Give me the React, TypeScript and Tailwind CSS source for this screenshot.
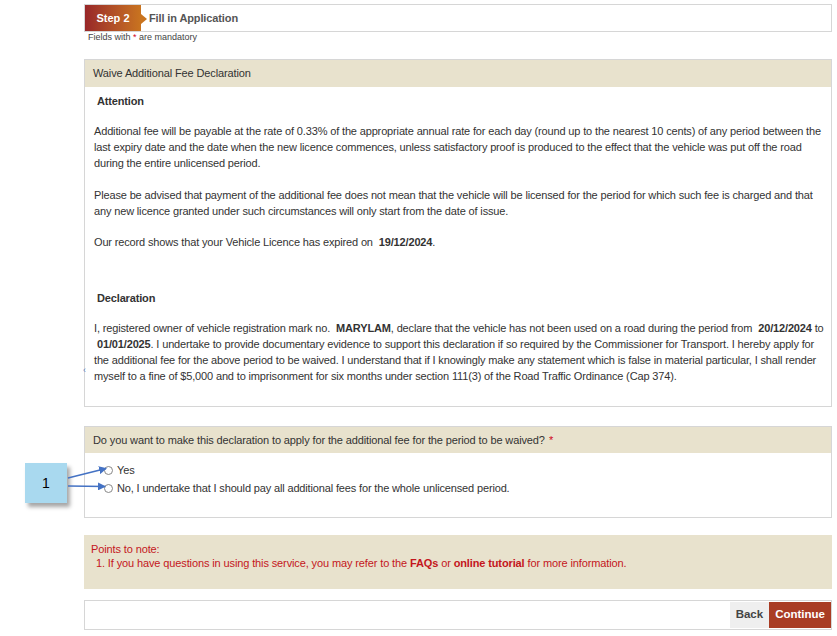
import React from "react";

const body = "text-[11px] leading-[16px] tracking-[-0.15px] text-[#333]";

function Callout() {
  return (
    <>
      <div className="absolute left-[25px] top-[463px] flex h-[40px] w-[42px] items-center justify-center bg-[#a9d9ef] text-[14px] text-black shadow-[3px_4px_4px_rgba(0,0,0,0.35)]">
        1
      </div>
      <svg
        className="absolute left-[66px] top-[460px]"
        width="50"
        height="36"
        viewBox="0 0 50 36"
      >
        <defs>
          <marker
            id="arr"
            markerWidth="8"
            markerHeight="8"
            refX="7"
            refY="4"
            orient="auto"
            markerUnits="userSpaceOnUse"
          >
            <path d="M0,0 L8,4 L0,8 z" fill="#4472c4" />
          </marker>
        </defs>
        <line x1="2" y1="18" x2="40" y2="8.5" stroke="#4472c4" strokeWidth="1.3" markerEnd="url(#arr)" />
        <line x1="2" y1="26" x2="39" y2="26.5" stroke="#4472c4" strokeWidth="1.3" markerEnd="url(#arr)" />
      </svg>
      <span className="absolute left-[83px] top-[364px] text-[9px] text-[#5b82c4]">‹</span>
    </>
  );
}

function Radio({ label }: { label: string }) {
  return (
    <label className="flex h-[18px] items-center gap-[4px] text-[11px] tracking-[-0.15px] text-[#333]">
      <span className="h-[9px] w-[9px] rounded-full border border-[#888] bg-white" />
      {label}
    </label>
  );
}

export default function App() {
  return (
    <div className="relative min-h-[636px] w-[837px] bg-white font-['Liberation_Sans',Arial,sans-serif]">
      <div className="ml-[84px] flex w-[748px] flex-col pt-[4px]">
        {/* Step bar */}
        <div className="flex h-[28px] items-center border border-[#d6d6d6] bg-white">
          <div className="relative flex h-full w-[56px] items-center justify-center bg-gradient-to-r from-[#982628] to-[#c9741f] text-[11px] font-bold text-white">
            Step 2
            <span className="absolute right-[-6px] top-[9px] h-0 w-0 border-y-[5px] border-l-[6px] border-y-transparent border-l-[#c9741f]" />
          </div>
          <span className="ml-[8px] text-[11px] font-bold tracking-[-0.12px] text-[#555]">Fill in Application</span>
        </div>
        <p className="ml-[4px] text-[9px] leading-[11px] text-[#444]">
          Fields with <span className="text-[#d0021b]">*</span> are mandatory
        </p>

        {/* Declaration panel */}
        <div className="mt-[16px] border border-[#d6d6d6]">
          <div className="flex h-[27px] items-center bg-[#e8e2cd] px-[8px] text-[11px] tracking-[-0.12px] text-[#333]">
            Waive Additional Fee Declaration
          </div>
          <div className={`pb-[22px] pl-[9px] pr-[3px] pt-[6px] ${body}`}>
            <p className="ml-[3px] font-bold">Attention</p>
            <p className="mt-[14px]">
              Additional fee will be payable at the rate of 0.33% of the appropriate annual rate for each day (round up to the nearest 10 cents) of any period between the last expiry date and the date when the new licence commences, unless satisfactory proof is produced to the effect that the vehicle was put off the road during the entire unlicensed period.
            </p>
            <p className="mt-[16px]">
              Please be advised that payment of the additional fee does not mean that the vehicle will be licensed for the period for which such fee is charged and that any new licence granted under such circumstances will only start from the date of issue.
            </p>
            <p className="mt-[15px]">
              Our record shows that your Vehicle Licence has expired on <b className="ml-[3px]">19/12/2024</b>.
            </p>
            <p className="ml-[3px] mt-[40px] font-bold">Declaration</p>
            <p className="mt-[14px]">
              I, registered owner of vehicle registration mark no. <b className="ml-[3px]">MARYLAM</b>, declare that the vehicle has not been used on a road during the period from <b className="ml-[3px]">20/12/2024</b> to <b className="ml-[3px]">01/01/2025</b>. I undertake to provide documentary evidence to support this declaration if so required by the Commissioner for Transport. I hereby apply for the additional fee for the above period to be waived. I understand that if I knowingly make any statement which is false in material particular, I shall render myself to a fine of $5,000 and to imprisonment for six months under section 111(3) of the Road Traffic Ordinance (Cap 374).
            </p>
          </div>
        </div>

        {/* Question panel */}
        <div className="mt-[19px] border border-[#d6d6d6]">
          <div className="flex h-[26px] items-center bg-[#e8e2cd] px-[8px] text-[11px] tracking-[-0.12px] text-[#333]">
            Do you want to make this declaration to apply for the additional fee for the period to be waived?
            <span className="ml-[4px] text-[#d0021b]">*</span>
          </div>
          <div className="px-[19px] pb-[20px] pt-[8px]">
            <Radio label="Yes" />
            <Radio label="No, I undertake that I should pay all additional fees for the whole unlicensed period." />
          </div>
        </div>

        {/* Points to note */}
        <div className="mt-[17px] bg-[#e8e2cd] px-[7px] pb-[19px] pt-[7px] text-[11px] leading-[14px] tracking-[-0.12px] text-[#c4161c]">
          <p>Points to note:</p>
          <p className="ml-[5px]">
            1. If you have questions in using this service, you may refer to the <b>FAQs</b> or <b>online tutorial</b> for more information.
          </p>
        </div>

        {/* Footer */}
        <div className="mt-[11px] flex h-[30px] items-stretch justify-end border border-[#d6d6d6] bg-white">
          <button className="my-[1px] bg-[#efefef] px-[6px] text-[11.5px] font-bold text-[#444]">Back</button>
          <button className="my-[1px] bg-[#a93c24] px-[6px] text-[11.5px] font-bold text-white">Continue</button>
        </div>
      </div>

      <Callout />
    </div>
  );
}
